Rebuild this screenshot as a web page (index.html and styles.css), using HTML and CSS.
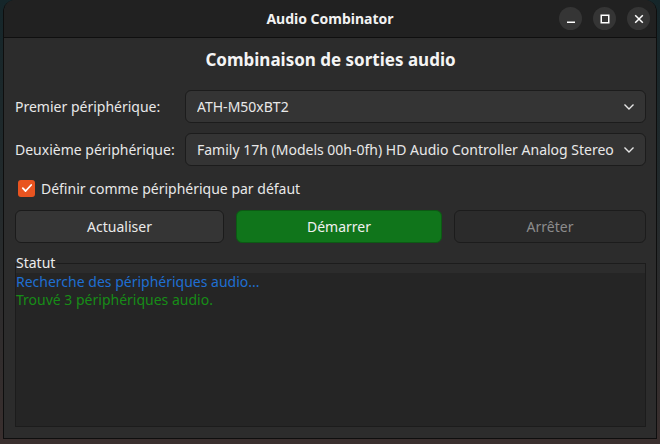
FILE: index.html
```html
<!DOCTYPE html>
<html lang="fr">
<head>
<meta charset="utf-8">
<title>Audio Combinator</title>
<link rel="stylesheet" href="styles.css">
</head>
<body>
<div class="window">
  <header class="headerbar">
    <span class="title">Audio Combinator</span>
    <div class="controls">
      <span class="wbtn"><svg width="10" height="10" viewBox="0 0 10 10"><rect x="1" y="7.5" width="8" height="1.5" fill="#fff"/></svg></span>
      <span class="wbtn"><svg width="10" height="10" viewBox="0 0 10 10"><rect x="1.25" y="1.25" width="7.5" height="7.5" fill="none" stroke="#fff" stroke-width="1.5"/></svg></span>
      <span class="wbtn"><svg width="10" height="10" viewBox="0 0 10 10"><path d="M1.2 1.2 L8.8 8.8 M8.8 1.2 L1.2 8.8" stroke="#fff" stroke-width="1.5"/></svg></span>
    </div>
  </header>
  <main class="content">
    <h1 class="heading">Combinaison de sorties audio</h1>
    <div class="form">
      <label class="lbl">Premier périphérique:</label>
      <div class="combo"><span class="combo-text">ATH-M50xBT2</span><svg class="chev" width="12" height="8" viewBox="0 0 12 8"><path d="M1.5 1.5 L6 6 L10.5 1.5" fill="none" stroke="#e6e6e6" stroke-width="1.4"/></svg></div>
      <label class="lbl">Deuxième périphérique:</label>
      <div class="combo"><span class="combo-text">Family 17h (Models 00h-0fh) HD Audio Controller Analog Stereo</span><svg class="chev" width="12" height="8" viewBox="0 0 12 8"><path d="M1.5 1.5 L6 6 L10.5 1.5" fill="none" stroke="#e6e6e6" stroke-width="1.4"/></svg></div>
    </div>
    <div class="check-row">
      <span class="checkbox"><svg width="12" height="10" viewBox="0 0 12 10"><path d="M1.8 5.2 L4.6 8 L10.2 2" fill="none" stroke="#fff" stroke-width="1.8" stroke-linecap="round" stroke-linejoin="round"/></svg></span>
      <span>Définir comme périphérique par défaut</span>
    </div>
    <div class="buttons">
      <button class="btn">Actualiser</button>
      <button class="btn btn-go">Démarrer</button>
      <button class="btn btn-off">Arrêter</button>
    </div>
    <fieldset class="frame">
      <legend class="frame-label">Statut</legend>
      <div class="log">
        <div class="log-blue">Recherche des périphériques audio...</div>
        <div class="log-green">Trouvé 3 périphériques audio.</div>
      </div>
    </fieldset>
  </main>
</div>
</body>
</html>
```
FILE: styles.css
```css
html, body {
  margin: 0;
  padding: 0;
}
body {
  width: 660px;
  height: 444px;
  overflow: hidden;
  background: linear-gradient(180deg, #15262a 0%, #232a2c 45%, #3a2f2e 100%);
  font-family: "Noto Sans", "Open Sans", sans-serif;
  font-size: 14px;
  color: #e8e8e8;
}
.window {
  margin-left: 3px;
  width: 652px;
  height: 438px;
  border: 1px solid #0e0e0e;
  border-top: none;
  border-radius: 12px 12px 0 0;
  background: #2c2c2c;
  display: flex;
  flex-direction: column;
  overflow: hidden;
}
.headerbar {
  height: 37px;
  flex: none;
  background: #212121;
  border-bottom: 1px solid #0f0f0f;
  display: flex;
  align-items: center;
  justify-content: center;
  position: relative;
}
.title {
  font-weight: bold;
  font-size: 14px;
  color: #f2f2f2;
}
.controls {
  position: absolute;
  right: 6px;
  top: 7px;
  display: flex;
  gap: 11px;
}
.wbtn {
  width: 23px;
  height: 23px;
  border-radius: 50%;
  background: #353535;
  display: flex;
  align-items: center;
  justify-content: center;
}
.content {
  flex: 1;
  display: flex;
  flex-direction: column;
  padding: 0 10px 11px 11px;
}
.heading {
  margin: 9px 0 0;
  text-align: center;
  font-size: 17px;
  font-weight: bold;
  line-height: 26px;
  color: #f4f4f4;
}
.form {
  margin-top: 17px;
  display: grid;
  grid-template-columns: 158px 1fr;
  column-gap: 12px;
  row-gap: 10px;
  align-items: center;
}
.lbl {
  white-space: nowrap;
}
.combo {
  height: 31px;
  border: 1px solid #1c1c1c;
  border-radius: 6px;
  background: #343434;
  display: flex;
  align-items: center;
  padding: 0 10px 0 11px;
}
.combo-text {
  flex: 1;
  white-space: nowrap;
  overflow: hidden;
}
.chev {
  flex: none;
  margin-left: 4px;
}
.check-row {
  margin-top: 10px;
  height: 24px;
  display: flex;
  align-items: center;
  gap: 6px;
  padding-left: 3px;
}
.checkbox {
  width: 17px;
  height: 17px;
  border-radius: 3px;
  background: #e95420;
  display: flex;
  align-items: center;
  justify-content: center;
}
.buttons {
  margin-top: 10px;
  display: grid;
  grid-template-columns: 209px 206px 1fr;
  column-gap: 12px;
}
.btn {
  height: 33px;
  border: 1px solid #1b1b1b;
  border-radius: 6px;
  background: #353535;
  color: #eaeaea;
  font-family: inherit;
  font-size: 14px;
  padding: 0;
}
.btn-go {
  background: #10751b;
  border-color: #0c5a14;
  color: #f0f0f0;
}
.btn-off {
  background: #2b2b2b;
  border-color: #1c1c1c;
  color: #8c8c8c;
}
.frame {
  flex: 1;
  margin: 11px 0 0;
  padding: 0;
  min-width: 0;
  border: 1px solid #1c1c1c;
  display: flex;
  flex-direction: column;
}
.frame-label {
  padding: 0;
  margin: 0;
  line-height: 18px;
  color: #ececec;
}
.log {
  flex: 1;
  margin-top: 1px;
  background: #252525;
  line-height: 18px;
}
.log-blue {
  color: #1f6fd2;
}
.log-green {
  color: #178c17;
}
```
